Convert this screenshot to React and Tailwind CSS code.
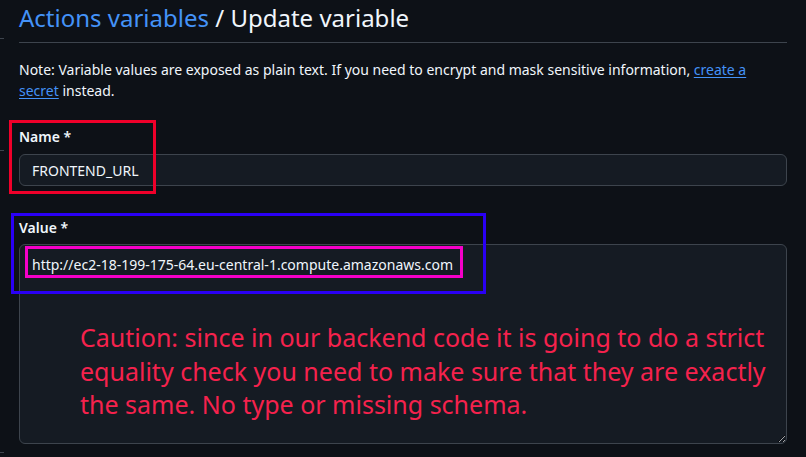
export default function App() {
    return (
        <div className="relative w-[806px] h-[457px] overflow-hidden bg-[#0d1117] text-[#f0f6fc]"
            style={{ fontFamily: '"Noto Sans", "Open Sans", sans-serif' }}>
            {/* sidebar border ticks on the left edge */}
            <div className="absolute left-0 top-[38px] w-[4px] h-px bg-[#3d444d]" />
            <div className="absolute left-0 top-[150px] w-[4px] h-px bg-[#3d444d]" />
            <div className="absolute left-0 top-[452px] w-[4px] h-px bg-[#3d444d]" />

            <div className="w-[768px] ml-[19px] flex flex-col">
                {/* Header */}
                <h1 className="text-[24px] leading-[36px] pb-[6px] border-b border-[#3d444d]">
                    <span className="text-[#4493f8]">Actions variables</span>
                    <span> / Update variable</span>
                </h1>

                <p className="mt-[16px] text-[14px] leading-[21px] text-[#f0f6fc]">
                    Note: Variable values are exposed as plain text. If you need to encrypt and mask sensitive information,{" "}
                    <a className="text-[#4493f8] underline underline-offset-2">create a secret</a> instead.
                </p>

                {/* Name */}
                <div className="mt-[26px] flex flex-col">
                    <label className="text-[14px] leading-[20px] font-semibold">Name *</label>
                    <input
                        readOnly
                        value="FRONTEND_URL"
                        className="mt-[7px] h-[32px] px-[12px] rounded-[6px] bg-[#151b23] border border-[#3d444d] text-[14px] text-[#f0f6fc] outline-none"
                    />
                </div>

                {/* Value */}
                <div className="mt-[32px] flex flex-col">
                    <label className="text-[14px] leading-[20px] font-semibold">Value *</label>
                    <textarea
                        readOnly
                        value="http://ec2-18-199-175-64.eu-central-1.compute.amazonaws.com"
                        className="mt-[6px] h-[200px] px-[12px] pt-[10px] pb-[8px] rounded-[6px] bg-[#151b23] border border-[#3d444d] text-[14px] leading-[20px] text-[#f0f6fc] outline-none"
                    />
                </div>
            </div>

            {/* Annotations */}
            <div className="absolute left-[9px] top-[120px] w-[147px] h-[74px] border-[3px] border-[#f0002a]" />
            <div className="absolute left-[11px] top-[213px] w-[475px] h-[81px] border-[3px] border-[#2a00f5]" />
            <div className="absolute left-[25px] top-[246px] w-[438px] h-[32px] border-[3px] border-[#f500c8]" />

            <div className="absolute left-[80px] top-[321px] flex flex-col text-[25px] leading-[33.5px] text-[#f5224d] whitespace-nowrap">
                <span>Caution: since in our backend code it is going to do a strict</span>
                <span>equality check you need to make sure that they are exactly</span>
                <span>the same. No type or missing schema.</span>
            </div>
        </div>
    )
}
